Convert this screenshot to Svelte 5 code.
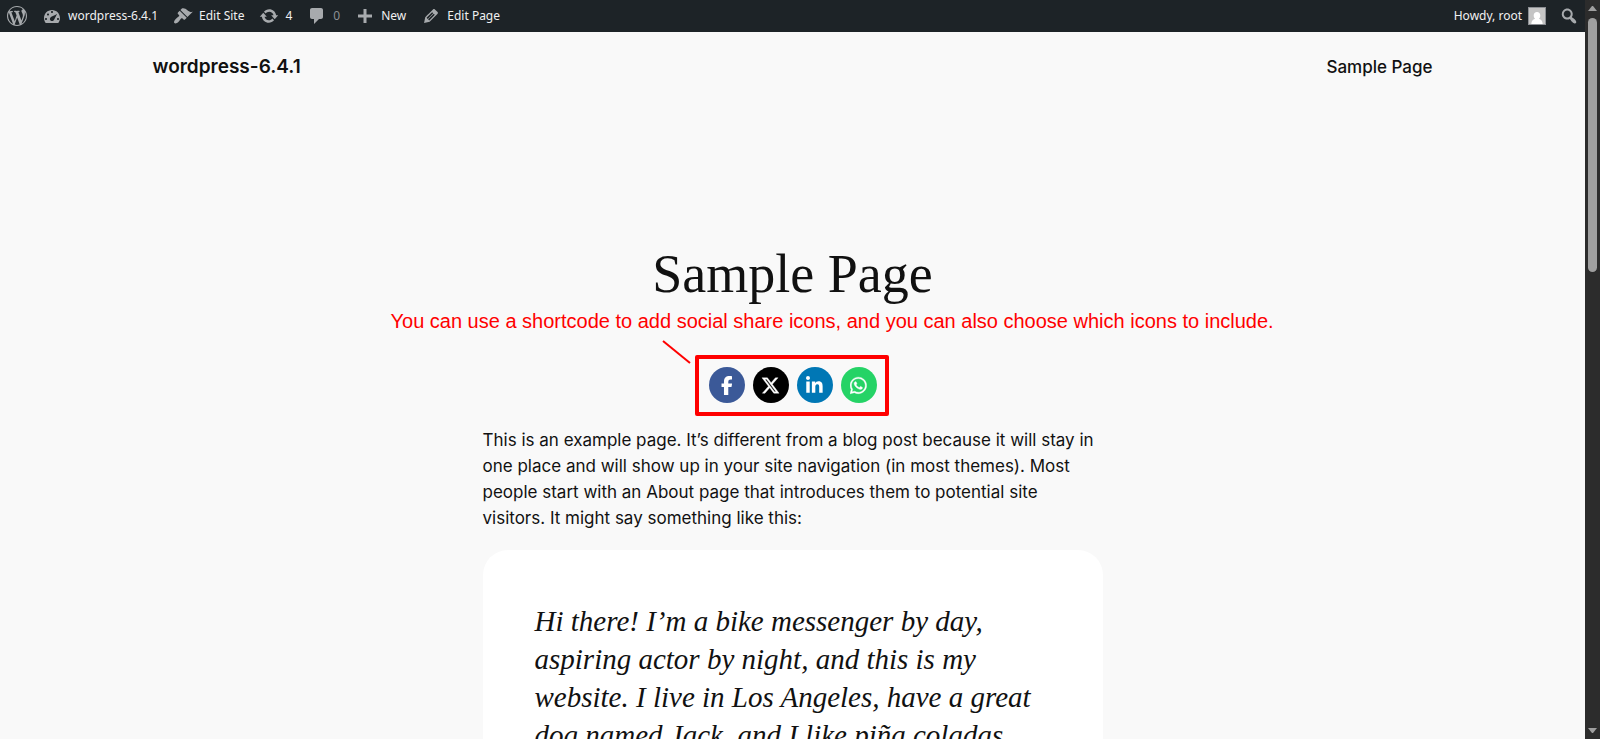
<script lang="ts">
	type Item = { label: string; icon: string; muted?: boolean };

	const wpLogo = 'M20 10c0-5.51-4.49-10-10-10C4.48 0 0 4.49 0 10c0 5.52 4.48 10 10 10 5.51 0 10-4.48 10-10zM7.78 15.37L4.37 6.22c.55-.02 1.17-.08 1.17-.08.5-.06.44-1.13-.06-1.11 0 0-1.45.11-2.37.11-.18 0-.37 0-.58-.01C4.12 2.69 6.87 1.11 10 1.11c2.33 0 4.45.87 6.05 2.34-.68-.11-1.65.39-1.65 1.58 0 .74.45 1.36.9 2.1.35.61.55 1.36.55 2.46 0 1.49-1.4 5-1.4 5l-3.03-8.37c.54-.02.82-.17.82-.17.5-.05.44-1.25-.06-1.22 0 0-1.44.12-2.38.12-.87 0-2.33-.12-2.33-.12-.5-.03-.56 1.2-.06 1.22l.92.08 1.26 3.41zM17.41 10c.24-.64.74-1.87.43-4.25.7 1.29 1.05 2.71 1.05 4.25 0 3.29-1.73 6.24-4.4 7.78.97-2.59 1.94-5.2 2.92-7.78zM6.1 18.09C3.12 16.65 1.11 13.53 1.11 10c0-1.3.23-2.48.72-3.59C3.25 10.3 4.67 14.2 6.1 18.09zm4.03-6.63l2.58 6.98c-.86.29-1.76.45-2.71.45-.79 0-1.57-.11-2.29-.33.81-2.38 1.62-4.74 2.42-7.1z';
	const search = 'M12.14 4.18c1.87 1.87 2.11 4.75.72 6.89.12.1.22.21.36.31.2.16.47.36.81.59.34.24.56.39.66.47.42.31.73.57.94.78.32.32.6.65.84 1 .25.35.44.69.59 1.04.14.35.21.68.18 1-.02.32-.14.59-.36.81s-.49.34-.81.36c-.31.02-.65-.04-.99-.19-.35-.14-.7-.34-1.04-.59-.35-.24-.68-.52-1-.84-.21-.21-.47-.52-.77-.93-.1-.13-.25-.35-.47-.66-.22-.32-.4-.57-.56-.78-.16-.2-.29-.35-.44-.5-2.07 1.09-4.69.76-6.44-.98-2.14-2.15-2.14-5.64 0-7.78 2.15-2.15 5.63-2.15 7.78 0zm-1.41 6.36c1.36-1.37 1.36-3.58 0-4.95-1.37-1.37-3.59-1.37-4.95 0-1.37 1.37-1.37 3.58 0 4.95 1.36 1.37 3.58 1.37 4.95 0z';

	const items: Item[] = [
		{ label: 'wordpress-6.4.1', icon: 'M3.76 17.01h12.48C17.34 15.63 18 13.9 18 12c0-4.41-3.58-8-8-8s-8 3.59-8 8c0 1.9.66 3.63 1.76 5.01zM9 6c0-.55.45-1 1-1s1 .45 1 1c0 .56-.45 1-1 1s-1-.44-1-1zM5 8.5c0-.55.45-1 1-1s1 .45 1 1c0 .56-.45 1-1 1s-1-.44-1-1zm3.52 2.9c.84-.83 6.51-3.5 6.51-3.5s-2.66 5.68-3.49 6.51c-.84.84-2.18.84-3.02 0-.83-.83-.83-2.18 0-3.01zM3 13c0-.55.45-1 1-1s1 .45 1 1c0 .56-.45 1-1 1s-1-.44-1-1zm12 0c0-.55.45-1 1-1s1 .45 1 1c0 .56-.45 1-1 1s-1-.44-1-1z' },
		{ label: 'Edit Site', icon: 'M14.48 11.06L7.41 3.99l1.5-1.5c.5-.56 2.3-.47 3.51.32 1.21.8 1.43 1.28 2.91 2.1 1.18.64 2.45 1.26 4.45.85zm-.71.71L6.7 4.7 4.93 6.47c-.39.39-.39 1.02 0 1.41l1.06 1.06c.39.39.39 1.03 0 1.42-.6.6-1.43 1.11-2.21 1.69-.35.26-.7.53-1.01.84C1.43 14.23.4 16.08 1.4 17.07c.99 1 2.84-.03 4.18-1.36.31-.31.58-.66.85-1.02.57-.78 1.08-1.61 1.69-2.21.39-.39 1.02-.39 1.41 0l1.06 1.06c.39.39 1.02.39 1.41 0z' },
		{ label: '4', icon: 'M10.2 3.28c3.53 0 6.43 2.61 6.92 6h2.08l-3.5 4-3.5-4h2.32c-.45-1.97-2.21-3.45-4.32-3.45-1.45 0-2.73.71-3.54 1.78L4.95 5.66C6.23 4.2 8.11 3.28 10.2 3.28zm-.4 13.44c-3.52 0-6.43-2.61-6.92-6H.8l3.5-4c1.17 1.33 2.33 2.67 3.5 4H5.48c.45 1.97 2.21 3.45 4.32 3.45 1.45 0 2.73-.71 3.54-1.78l1.71 1.95c-1.28 1.46-3.15 2.38-5.25 2.38z' },
		{ label: '0', icon: 'M5 2h9c1.1 0 2 .9 2 2v7c0 1.1-.9 2-2 2h-2l-5 5v-5H5c-1.1 0-2-.9-2-2V4c0-1.1.9-2 2-2z', muted: true },
		{ label: 'New', icon: 'M17 8.5v3h-5.5V17h-3v-5.5H3v-3h5.500V3h3v5.500z' },
		{ label: 'Edit Page', icon: 'M13.89 3.39l2.71 2.72c.46.46.42 1.24.03 1.64l-8.01 8.02-5.56 1.16 1.16-5.58s7.6-7.63 7.99-8.03c.39-.39 1.22-.39 1.68.07zm-2.73 2.79l-5.59 5.61 1.11 1.11 5.54-5.65zm-2.97 8.23l5.58-5.6-1.07-1.08-5.59 5.6z' }
	];

	const networks = [
		{ name: 'facebook', box: '0 0 320 512', path: 'M80 299.3V512H196V299.3h86.5l18-97.8H196V166.9c0-51.7 20.3-71.5 72.7-71.5c16.3 0 29.4 .4 37 1.2V7.9C291.4 4 256.4 0 236.2 0C129.3 0 80 50.5 80 159.4v42.1H14v97.8H80z' },
		{ name: 'x', box: '0 0 512 512', path: 'M389.2 48h70.6L305.6 224.2 487 464H345L233.7 318.6 106.5 464H35.8L200.7 275.5 26.8 48H172.4L272.9 180.9 389.2 48zM364.4 421.8h39.1L151.1 88h-42L364.4 421.8z' },
		{ name: 'linkedin', box: '0 0 448 512', path: 'M100.28 448H7.4V148.9h92.88zM53.79 108.1C24.09 108.1 0 83.5 0 53.8a53.79 53.79 0 0 1 107.58 0c0 29.7-24.1 54.3-53.79 54.3zM447.9 448h-92.68V302.4c0-34.7-.7-79.2-48.29-79.2-48.29 0-55.69 37.7-55.69 76.7V448h-92.78V148.9h89.08v40.8h1.3c12.4-23.5 42.69-48.3 87.88-48.3 94 0 111.28 61.9 111.28 142.3V448z' },
		{ name: 'whatsapp', box: '0 0 448 512', path: 'M380.9 97.1C339 55.1 283.2 32 223.9 32c-122.4 0-222 99.6-222 222 0 39.1 10.2 77.3 29.6 111L0 480l117.7-30.9c32.4 17.7 68.9 27 106.1 27h.1c122.3 0 224.1-99.6 224.1-222 0-59.3-25.2-115-67.1-157zm-157 341.6c-33.2 0-65.7-8.9-94-25.7l-6.7-4-69.8 18.3L72 359.2l-4.4-7c-18.5-29.4-28.2-63.3-28.2-98.2 0-101.7 82.8-184.5 184.6-184.5 49.3 0 95.6 19.2 130.4 54.1 34.8 34.9 56.2 81.2 56.1 130.5 0 101.8-84.9 184.6-186.6 184.6zm101.2-138.2c-5.5-2.8-32.8-16.2-37.9-18-5.1-1.9-8.8-2.8-12.5 2.8-3.7 5.6-14.3 18-17.6 21.8-3.2 3.7-6.5 4.2-12 1.4-32.6-16.3-54-29.1-75.5-66-5.7-9.8 5.7-9.1 16.3-30.3 1.8-3.7.9-6.9-.5-9.7-1.4-2.8-12.5-30.1-17.1-41.2-4.5-10.8-9.1-9.3-12.5-9.5-3.2-.2-6.9-.2-10.6-.2-3.7 0-9.7 1.4-14.8 6.9-5.1 5.6-19.4 19-19.4 46.3 0 27.3 19.9 53.7 22.6 57.4 2.8 3.7 39.1 59.7 94.8 83.8 35.2 15.2 49 16.5 66.6 13.9 10.7-1.6 32.8-13.4 37.4-26.4 4.6-13 4.6-24.1 3.2-26.4-1.3-2.5-5-3.9-10.5-6.6z' }
	];
</script>

<div class="window">
	<div class="page">
		<nav class="adminbar">
			<a class="logo" href="#about" aria-label="About WordPress">
				<svg viewBox="0 0 20 20"><path d={wpLogo} /></svg>
			</a>
			{#each items as item}
				<a href="#admin" class:muted={item.muted}>
					<svg viewBox="0 0 20 20"><path fill-rule="evenodd" d={item.icon} /></svg>
					<span>{item.label}</span>
				</a>
			{/each}
			<a class="account" href="#profile">
				<span>Howdy, root</span>
				<svg class="avatar" viewBox="0 0 18 18">
					<rect width="18" height="18" fill="#8c8f94" />
					<rect x="1" y="1" width="16" height="16" fill="#c5c5c5" />
					<path fill="#fff" d="M9 5c-2 0-3.300 1.400-3.300 3.400 0 1.500.6 2.700 1.500 3.300C4.700 12.300 3.500 14 3.300 17h11.400c-.2-3-1.400-4.700-3.900-5.300.9-.6 1.500-1.800 1.500-3.300C12.300 6.400 11 5 9 5z" />
				</svg>
			</a>
			<button aria-label="Search">
				<svg viewBox="0 0 20 20"><path d={search} /></svg>
			</button>
		</nav>

		<header>
			<a class="site-title" href="#home">wordpress-6.4.1</a>
			<a class="nav-link" href="#sample">Sample Page</a>
		</header>

		<main>
			<h1>Sample Page</h1>

			<div class="share">
				<p class="note">You can use a shortcode to add social share icons, and you can also choose which icons to include.</p>
				<svg class="pointer" viewBox="0 0 30 25"><path d="M1 1l27 22" /></svg>
				<div class="frame"></div>
				{#each networks as n}
					<a class={n.name} href="#share" aria-label="Share on {n.name}">
						<svg viewBox={n.box}><path d={n.path} /></svg>
					</a>
				{/each}
			</div>

			<p>This is an example page. It’s different from a blog post because it will stay in one place and will show up in your site navigation (in most themes). Most people start with an About page that introduces them to potential site visitors. It might say something like this:</p>

			<blockquote>
				Hi there! I’m a bike messenger by day,<br />
				aspiring actor by night, and this is my<br />
				website. I live in Los Angeles, have a great<br />
				dog named Jack, and I like piña coladas.
			</blockquote>
		</main>
	</div>

	<div class="scrollbar">
		<svg viewBox="0 0 9 5"><path d="M4 0h1l4 5H0z" /></svg>
		<div class="thumb"></div>
		<svg viewBox="0 0 9 5"><path d="M0 0h9L5 5H4z" /></svg>
	</div>
</div>

<style>
	:global(body) {
		background: #f9f9f9;
		overflow: hidden;
	}

	.window {
		display: grid;
		grid-template-columns: 1fr 15px;
		height: 100vh;
		font-family: Inter, sans-serif;
		color: #111;
	}

	.page {
		overflow: hidden;
		background: #f9f9f9;
	}

	a {
		color: inherit;
		text-decoration: none;
	}

	.adminbar {
		display: flex;
		height: 32px;
		background: #1d2327;
		color: #f0f0f1;
		font: 12px/32px "Noto Sans", sans-serif;
	}

	.adminbar a,
	.adminbar button {
		display: flex;
		align-items: center;
		gap: 6px;
		padding: 0 8px 0 7px;
		border: 0;
		background: none;
	}

	.adminbar button { padding: 0 6px 0 5px; }

	.adminbar svg {
		width: 20px;
		height: 20px;
		fill: #a7aaad;
	}

	.adminbar .muted { color: #8c8f94; }

	.adminbar .account { margin-left: auto; }

	.adminbar .avatar {
		width: 18px;
		height: 18px;
	}

	header {
		display: flex;
		justify-content: space-between;
		align-items: center;
		max-width: 1280px;
		margin: 0 auto;
		padding: 20px 50px;
		line-height: 30px;
	}

	.site-title {
		font-size: 19px;
		font-weight: 600;
	}

	.nav-link {
		font-size: 17px;
		font-weight: 500;
	}

	main {
		max-width: 620px;
		margin: 0 auto;
		padding-top: 140px;
	}

	h1 {
		margin: 0 0 61px;
		font: 54px/64px "Liberation Serif", serif;
		text-align: center;
	}

	.share {
		position: relative;
		display: flex;
		justify-content: center;
		gap: 8px;
	}

	.share a {
		display: flex;
		align-items: center;
		justify-content: center;
		width: 36px;
		height: 36px;
		border-radius: 50%;
	}

	.share a svg {
		height: 19px;
		fill: #fff;
	}

	.facebook { background: #3b5998; }
	.x { background: #000; }
	.linkedin { background: #0077b5; }
	.whatsapp { background: #25d366; }

	.x path,
	.whatsapp path {
		stroke: #fff;
		stroke-width: 10;
	}

	/* red callout drawn over the article */
	.note {
		position: absolute;
		left: -92px;
		bottom: 70px;
		margin: 0;
		color: #f00;
		font: 20px/24px "Liberation Sans", sans-serif;
		white-space: nowrap;
	}

	.pointer {
		position: absolute;
		left: 179px;
		bottom: 38px;
		width: 30px;
		height: 25px;
		fill: none;
		stroke: #f00;
		stroke-width: 2;
	}

	.frame {
		position: absolute;
		top: -12px;
		bottom: -13px;
		left: 50%;
		width: 186px;
		margin-left: -98px;
		border: 4px solid #f00;
		border-radius: 2px;
	}

	.share + p {
		margin: 24px 0 19px;
		font-size: 17px;
		line-height: 26px;
	}

	blockquote {
		margin: 0;
		padding: 52px;
		border-radius: 25px;
		background: #fff;
		font: italic 29px/38px "Liberation Serif", serif;
	}

	.scrollbar {
		display: flex;
		flex-direction: column;
		align-items: center;
		padding: 6px 0;
		background: #2c2c2c;
	}

	.scrollbar svg {
		width: 9px;
		height: 5px;
		fill: #9f9f9f;
	}

	.thumb {
		width: 9px;
		height: 35%;
		margin: 7px 0 auto;
		border-radius: 5px;
		background: #9f9f9f;
	}
</style>
